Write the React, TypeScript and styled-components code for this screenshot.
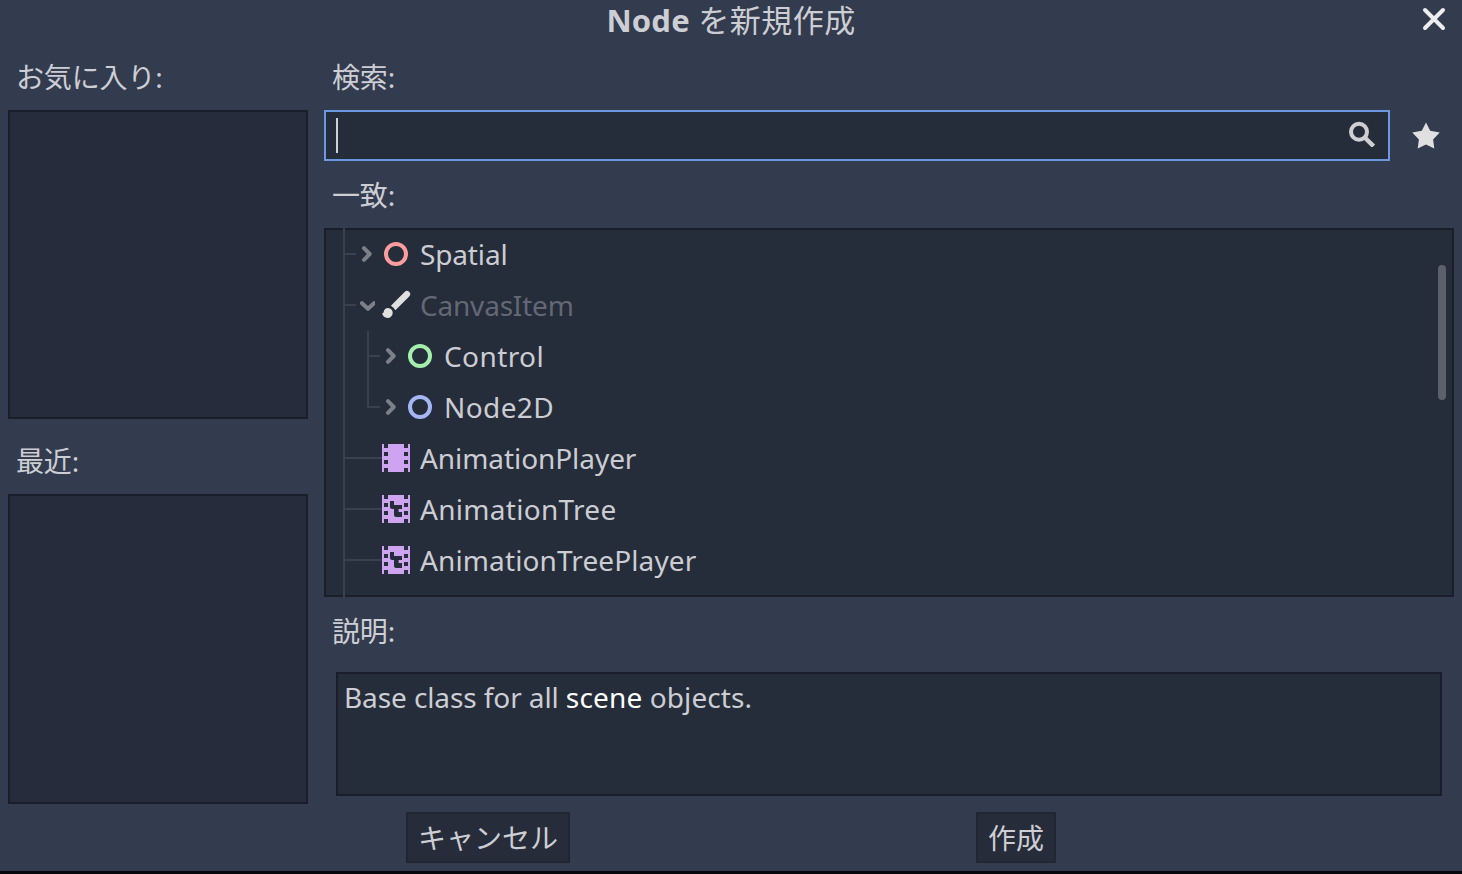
import React from "react";
import styled, { createGlobalStyle } from "styled-components";

const GlobalStyle = createGlobalStyle`
  *, *::before, *::after { box-sizing: border-box; }
  html, body { margin: 0; padding: 0; background: #05070d; overflow: hidden; }
  button, input { font: inherit; color: inherit; }
`;

const Dialog = styled.div`
  width: 1462px;
  height: 871px;
  background: #333b4f;
  color: #cdced3;
  font-family: "Noto Sans", "Noto Sans CJK JP", sans-serif;
  font-size: 28px;
  line-height: 50px;
  white-space: nowrap;
  display: flex;
  flex-direction: column;
`;

const TitleBar = styled.header`
  height: 51px;
  display: grid;
  grid-template-columns: 56px 1fr 56px;
  justify-items: center;
`;

const Title = styled.h1`
  grid-column: 2;
  margin: 0;
  font-size: 31px;
  font-weight: 400;
  line-height: 40px;
  height: 40px;
  letter-spacing: 0.45px;
`;

const TitleClass = styled.span`
  font-weight: 700;
  letter-spacing: 0.2px;
`;

const CloseButton = styled.button`
  width: 24px;
  height: 24px;
  margin-top: 7px;
  padding: 0;
  border: 0;
  background: none;
  color: #ededee;
  display: flex;
`;

const Body = styled.main`
  display: flex;
  gap: 16px;
  padding: 0 8px;
  height: 753px;
`;

const SideColumn = styled.aside`
  width: 300px;
  display: flex;
  flex-direction: column;
`;

const MainColumn = styled.section`
  flex: 1;
  display: flex;
  flex-direction: column;
`;

const Label = styled.div<{ $height: number; $top?: number }>`
  height: ${(p) => p.$height}px;
  padding: ${(p) => p.$top ?? 1}px 0 0 8px;
  line-height: 50px;
  letter-spacing: -0.15px;
`;

const ListPanel = styled.div<{ $height: number }>`
  height: ${(p) => p.$height}px;
  background: #262c3b;
  border: 2px solid #191e2a;
`;

const SearchRow = styled.div`
  display: flex;
  height: 51px;
`;

const SearchField = styled.div`
  width: 1066px;
  height: 51px;
  background: #252c3a;
  border: 2px solid #6b98e1;
  display: flex;
  align-items: flex-start;
  justify-content: space-between;
  padding: 6px 13px 0 10px;
`;

const Caret = styled.span`
  width: 2px;
  height: 35px;
  background: #cfd0d4;
`;

const SearchGlyph = styled.svg`
  margin-top: 1px;
`;

const FavoriteButton = styled.button`
  flex: 1;
  padding: 0 0 0 7px;
  border: 0;
  background: none;
  display: flex;
  align-items: center;
  justify-content: center;
`;

const Tree = styled.div`
  height: 369px;
  background: #252c3a;
  box-shadow: inset 0 0 0 2px #191e2a;
  display: flex;
  padding: 0 8px 0 19px;
  overflow: hidden;
`;

const Trunk = styled.span<{ $height: number }>`
  width: 2px;
  height: ${(p) => p.$height}px;
  background: #3a414e;
  flex: none;
`;

const TreeRows = styled.div`
  flex: 1;
  padding-top: 1px;
`;

const Row = styled.div`
  height: 51px;
  line-height: 51px;
  display: flex;
  align-items: center;
`;

const Dash = styled.span<{ $width: number }>`
  width: ${(p) => p.$width}px;
  height: 2px;
  margin-bottom: 1px;
  background: #3a414e;
`;

const ArrowBox = styled.span`
  width: 16px;
  height: 17px;
  margin: 0 5px 0 3px;
  display: flex;
`;

const NodeIcon = styled.svg<{ $gap?: number }>`
  width: 32px;
  height: 32px;
  margin: 0 8px 1px ${(p) => p.$gap ?? 0}px;
  flex: none;
`;

const NodeName = styled.span<{ $disabled?: boolean; $tracking?: number }>`
  color: ${(p) => (p.$disabled ? "#636874" : "#cccdd3")};
  letter-spacing: ${(p) => p.$tracking ?? 0}px;
`;

const Branch = styled.div`
  display: flex;
  padding-left: 22px;
`;

const ScrollThumb = styled.div`
  width: 8px;
  height: 135px;
  margin-top: 37px;
  border-radius: 4px;
  background: #5b606b;
`;

const Description = styled.div`
  height: 124px;
  margin: 0 12px;
  padding: 0 6px;
  background: #252c3a;
  border: 2px solid #191e2a;
  line-height: 47px;
  letter-spacing: -0.1px;
`;

const Highlight = styled.span`
  color: #fff;
  letter-spacing: 0.15px;
`;

const Rest = styled.span`
  letter-spacing: 0.1px;
`;

const Footer = styled.footer`
  display: flex;
  height: 51px;
  margin-top: 8px;
  padding-left: 406px;
  gap: 406px;
`;

const ActionButton = styled.button<{ $width: number }>`
  width: ${(p) => p.$width}px;
  height: 51px;
  padding: 1px 0 0;
  background: #262c3a;
  border: 2px solid #212633;
  line-height: 46px;
  text-align: center;
`;

const Arrow = ({ open = false }: { open?: boolean }) => (
  <ArrowBox>
    <svg width="16" height="17" viewBox="0 0 16 17" fill="none" stroke="#7c8089" strokeWidth="4" strokeLinecap="round" strokeLinejoin="round">
      <path d={open ? "M3 6.2l6 5.6 6-5.6" : "M5 2.2L10.7 8 5 13.8"} />
    </svg>
  </ArrowBox>
);

const Ring = ({ color }: { color: string }) => (
  <NodeIcon viewBox="0 0 16 16">
    <circle cx="8" cy="8" r="5" fill="none" stroke={color} strokeWidth="2" />
  </NodeIcon>
);

const Brush = () => (
  <NodeIcon viewBox="0 0 32 32" fill="#e0e0e0">
    <path d="M24.6 2.900a3.200 3.200 0 0 1 4.600 4.500L15.400 21.200a10.500 10.500 0 0 0-4.500-4.500z" />
    <path d="M8.200 18.900a4.800 4.800 0 0 1 4.500 4.900 5.200 5.200 0 0 1-5.200 5.200c-2.700 0-4.700-1.600-5.500-4.900 1 .3 1.500-.2 1.700-1.400a4.500 4.500 0 0 1 4.500-3.800z" />
  </NodeIcon>
);

const Film = ({ tree = false }: { tree?: boolean }) => (
  <NodeIcon $gap={-2} viewBox="0 0 16 16" fill="#cea4f1" fillRule="evenodd">
    <path
      d={
        "M1 1v14h1v-2h2v2h8v-2h2v2h1V1h-1v2h-2V1H4v2H2V1zM2 5h2v2H2zM12 5h2v2h-2zM2 9h2v2H2zM12 9h2v2h-2z" +
        (tree ? "M5 4h2v2h4v2H9.300v1.500H11V12H8a1 1 0 0 1-1-1V8H6a1 1 0 0 1-1-1z" : "")
      }
    />
  </NodeIcon>
);

const animationNodes = [
  { name: "AnimationPlayer", tree: false, tracking: -0.07 },
  { name: "AnimationTree", tree: true, tracking: 0.3 },
  { name: "AnimationTreePlayer", tree: true, tracking: 0.12 },
];

export default function App() {
  return (
    <>
      <GlobalStyle />
      <Dialog>
        <TitleBar>
          <Title>
            <TitleClass>Node</TitleClass> を新規作成
          </Title>
          <CloseButton aria-label="閉じる">
            <svg width="24" height="24" viewBox="0 0 24 24" fill="none" stroke="currentColor" strokeWidth="4" strokeLinecap="round">
              <path d="M3 3l18 18M21 3L3 21" />
            </svg>
          </CloseButton>
        </TitleBar>
        <Body>
          <SideColumn>
            <Label $height={59}>お気に入り:</Label>
            <ListPanel $height={309} />
            <Label $height={75} $top={17}>最近:</Label>
            <ListPanel $height={310} />
          </SideColumn>
          <MainColumn>
            <Label $height={59}>検索:</Label>
            <SearchRow>
              <SearchField>
                <Caret />
                <SearchGlyph width="28" height="28" viewBox="0 0 28 28" fill="none" stroke="#cfcfd1" strokeWidth="4">
                  <circle cx="12" cy="12.700" r="8" />
                  <path d="M17.500 18.200l9 9" strokeWidth="4.400" />
                </SearchGlyph>
              </SearchField>
              <FavoriteButton aria-label="お気に入り">
                <svg width="28" height="27" viewBox="0 0 28 27" fill="#e0e0e0">
                  <path d="M14 .4l4.200 8.300 9.500 1.700-6.600 7 1.200 9.100L14 22.500l-8.300 4 1.200-9.100-6.600-7 9.500-1.700z" />
                </svg>
              </FavoriteButton>
            </SearchRow>
            <Label $height={67} $top={9}>一致:</Label>
            <Tree>
              <Trunk $height={369} />
              <TreeRows>
                <Row>
                  <Dash $width={11} />
                  <Arrow />
                  <Ring color="#fc9c9c" />
                  <NodeName $tracking={-0.15}>Spatial</NodeName>
                </Row>
                <Row>
                  <Dash $width={11} />
                  <Arrow open />
                  <Brush />
                  <NodeName $disabled $tracking={-0.2}>CanvasItem</NodeName>
                </Row>
                <Branch>
                  <Trunk $height={77} />
                  <div>
                    <Row>
                      <Dash $width={11} />
                      <Arrow />
                      <Ring color="#a5efac" />
                      <NodeName $tracking={0.4}>Control</NodeName>
                    </Row>
                    <Row>
                      <Dash $width={11} />
                      <Arrow />
                      <Ring color="#a5b7f3" />
                      <NodeName $tracking={0.4}>Node2D</NodeName>
                    </Row>
                  </div>
                </Branch>
                {animationNodes.map((node) => (
                  <Row key={node.name}>
                    <Dash $width={37} />
                    <Film tree={node.tree} />
                    <NodeName $tracking={node.tracking}>{node.name}</NodeName>
                  </Row>
                ))}
              </TreeRows>
              <ScrollThumb />
            </Tree>
            <Label $height={75} $top={9}>説明:</Label>
            <Description>
              Base class for all <Highlight>scene</Highlight>
              <Rest> objects.</Rest>
            </Description>
          </MainColumn>
        </Body>
        <Footer>
          <ActionButton $width={164}>キャンセル</ActionButton>
          <ActionButton $width={80}>作成</ActionButton>
        </Footer>
      </Dialog>
    </>
  );
}
